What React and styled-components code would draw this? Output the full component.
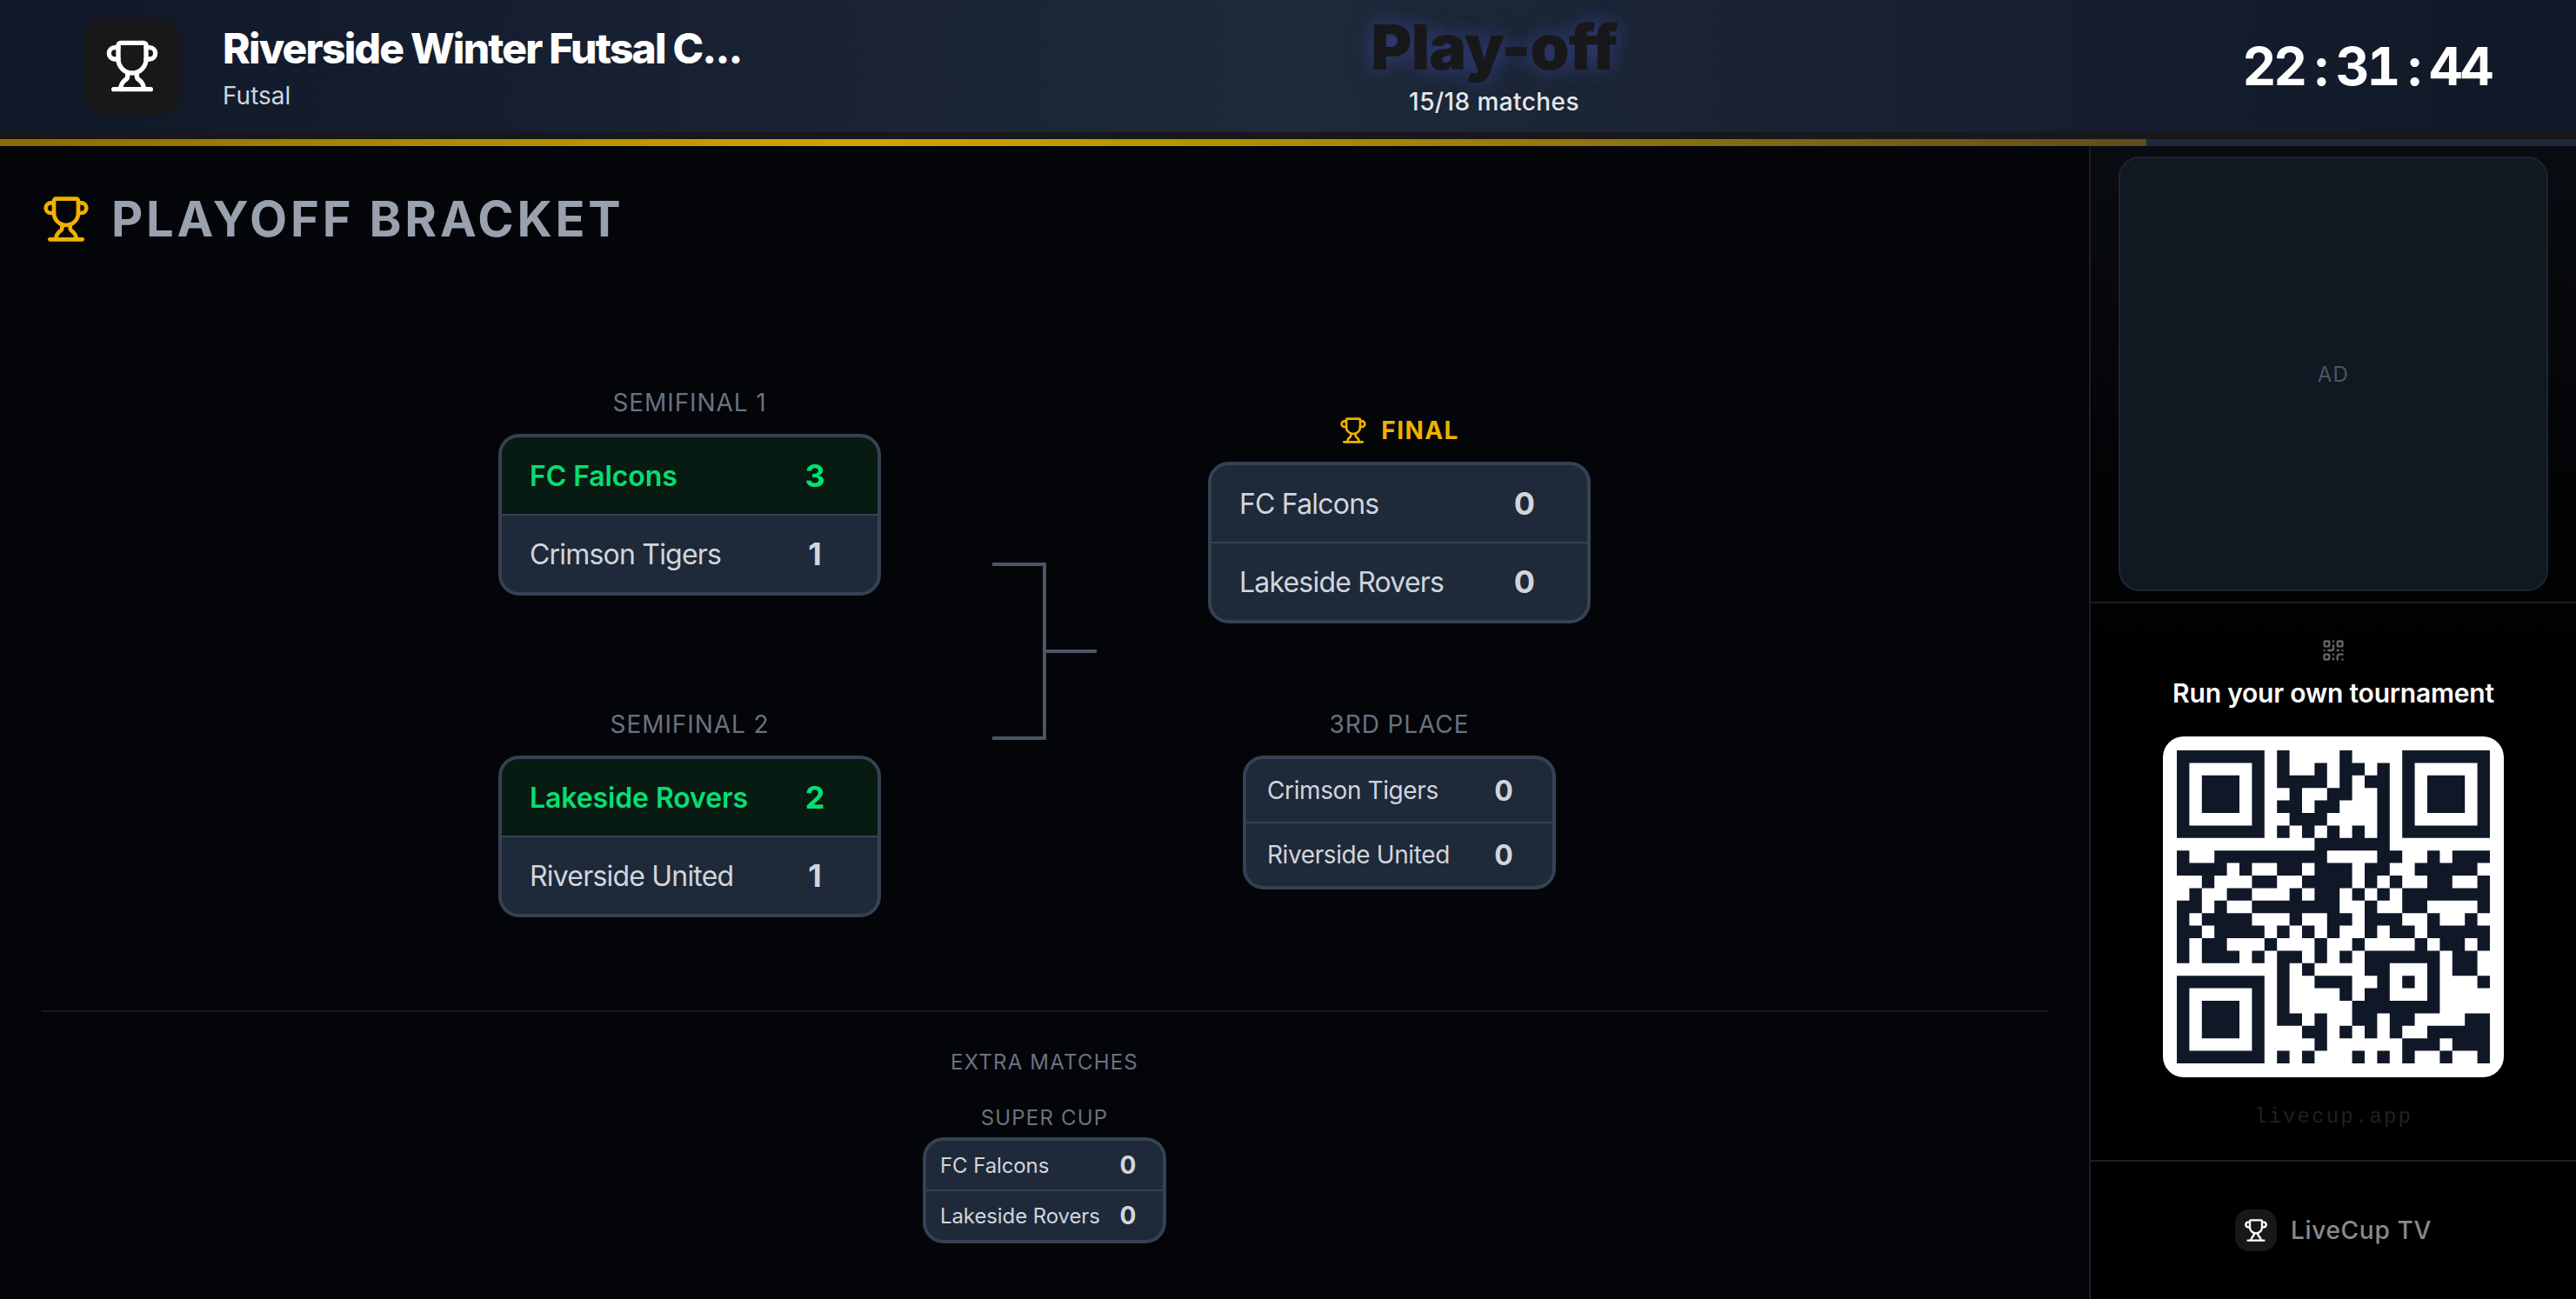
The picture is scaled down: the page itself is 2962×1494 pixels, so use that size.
import React from 'react';
import styled, { createGlobalStyle } from 'styled-components';
import { Trophy, QrCode } from 'lucide-react';

const GlobalStyle = createGlobalStyle`
  html, body {
    margin: 0;
    padding: 0;
    background: #030508;
  }
  * {
    box-sizing: border-box;
  }
  #root {
    font-family: Inter, 'Liberation Sans', sans-serif;
  }
`;

const SIZES = {
  lg: { width: 440, row: 88, pad: 32, name: 32, score: 36, cell: 80, track: -0.8 },
  md: { width: 360, row: 72, pad: 24, name: 28, score: 32, cell: 64, track: -0.4 },
  sm: { width: 280, row: 56, pad: 16, name: 24, score: 28, cell: 48, track: -0.1 },
};

const Page = styled.div`
  width: 100%;
  height: 100vh;
  display: flex;
  flex-direction: column;
  overflow: hidden;
  background: #030508;
`;

const Header = styled.header`
  height: 152px;
  flex-shrink: 0;
  padding: 0 96px;
  display: flex;
  align-items: center;
  justify-content: space-between;
  background: linear-gradient(90deg, #101828, #1e2939, #101828);
`;

const Brand = styled.div`
  width: 760px;
  display: flex;
  align-items: center;
  gap: 48px;
`;

const BrandIcon = styled.div`
  width: 112px;
  height: 112px;
  flex-shrink: 0;
  border-radius: 24px;
  background: #18181b;
  color: #fff;
  display: flex;
  align-items: center;
  justify-content: center;
`;

const BrandText = styled.div`
  min-width: 0;
`;

const TournamentName = styled.div`
  font-size: 48px;
  line-height: 60px;
  font-weight: 800;
  letter-spacing: -0.038em;
  color: #fff;
  white-space: nowrap;
`;

const Sport = styled.div`
  margin-top: 8px;
  font-size: 28px;
  line-height: 32px;
  color: #d1d5dc;
`;

const Phase = styled.div`
  display: flex;
  flex-direction: column;
  align-items: center;
`;

const PhaseName = styled.div`
  font-size: 72px;
  line-height: 72px;
  font-weight: 900;
  letter-spacing: -0.8px;
  color: #18181b;
  text-shadow: 0 0 24px rgba(79, 91, 213, 0.5);
`;

const PhaseCount = styled.div`
  margin-top: 9px;
  font-size: 28px;
  line-height: 36px;
  font-weight: 500;
  letter-spacing: 0.4px;
  color: #e5e7eb;
`;

const Clock = styled.div`
  display: flex;
  font-size: 60px;
  line-height: 72px;
  font-weight: 700;
  font-variant-numeric: tabular-nums;
  color: #fff;
`;

const ClockChar = styled.span`
  width: 35.75px;
  display: flex;
  justify-content: center;
`;

const ProgressTrack = styled.div`
  height: 16px;
  flex-shrink: 0;
  border-top: 8px solid #18181b;
  background: #1e2939;
`;

const ProgressFill = styled.div`
  height: 100%;
  background: linear-gradient(90deg, #8a6c00 0%, #d0a505 40%, #b39200 57%, #5f4c1c 100%);
`;

const Body = styled.div`
  flex: 1;
  min-height: 0;
  display: flex;
`;

const Main = styled.main`
  flex: 1;
  min-width: 0;
  padding: 48px 48px 48px;
  display: flex;
  flex-direction: column;
`;

const SectionTitle = styled.h1`
  margin: 0 0 48px;
  height: 72px;
  display: flex;
  align-items: center;
  gap: 24px;
  font-size: 56px;
  line-height: 72px;
  font-weight: 700;
  letter-spacing: 0.068em;
  color: #99a1af;
  svg {
    color: #f0b100;
  }
`;

const BracketArea = styled.div`
  flex: 1;
  min-height: 0;
  display: flex;
  align-items: center;
  justify-content: center;
  gap: 128px;
`;

const Round = styled.div`
  width: 440px;
  display: flex;
  flex-direction: column;
  align-items: center;
  gap: ${(p) => p.$gap}px;
`;

const MatchGroup = styled.div`
  display: flex;
  flex-direction: column;
  align-items: center;
  gap: ${(p) => p.$gap}px;
`;

const MatchLabel = styled.div`
  font-size: ${(p) => (p.$small ? 24 : 28)}px;
  line-height: ${(p) => (p.$small ? 32 : 40)}px;
  letter-spacing: ${(p) => (p.$small ? 1.2 : 0.9)}px;
  text-transform: uppercase;
  color: #6a7282;
`;

const FinalLabel = styled.div`
  display: flex;
  align-items: center;
  gap: 16px;
  font-size: 28px;
  line-height: 40px;
  font-weight: 700;
  letter-spacing: 0.05em;
  text-transform: uppercase;
  color: #f0b100;
`;

const Card = styled.div`
  width: ${(p) => SIZES[p.$size].width}px;
  border: 4px solid #364153;
  border-radius: 24px;
  background: #1e2939;
  overflow: hidden;
`;

const TeamRow = styled.div`
  height: ${(p) => SIZES[p.$size].row}px;
  padding: 0 ${(p) => SIZES[p.$size].pad}px;
  display: flex;
  align-items: center;
  justify-content: space-between;
  background: ${(p) => (p.$winner ? '#081b12' : 'transparent')};
  & + & {
    box-sizing: content-box;
    border-top: 2px solid #364153;
  }
`;

const TeamName = styled.span`
  font-size: ${(p) => SIZES[p.$size].name}px;
  font-weight: ${(p) => (p.$winner ? 600 : 400)};
  letter-spacing: ${(p) => (p.$winner ? -0.1 : SIZES[p.$size].track)}px;
  color: ${(p) => (p.$winner ? '#05df72' : '#d1d5dc')};
  white-space: nowrap;
`;

const Score = styled.span`
  width: ${(p) => SIZES[p.$size].cell}px;
  text-align: center;
  flex-shrink: 0;
  font-size: ${(p) => SIZES[p.$size].score}px;
  font-weight: 700;
  color: ${(p) => (p.$winner ? '#05df72' : '#d1d5dc')};
`;

const Connector = styled.div`
  width: 120px;
  flex-shrink: 0;
  display: flex;
  align-items: center;
`;

const ConnectorBracket = styled.div`
  width: 62px;
  height: 204px;
  border: 4px solid #4a5565;
  border-left: none;
`;

const ConnectorStub = styled.div`
  width: 58px;
  height: 4px;
  background: #4a5565;
`;

const Extras = styled.section`
  flex-shrink: 0;
  border-top: 2px solid #18181b;
  padding: 42px 0 16px;
  display: flex;
  flex-direction: column;
  align-items: center;
`;

const ExtrasTitle = styled.div`
  margin-bottom: 32px;
  font-size: 24px;
  line-height: 32px;
  letter-spacing: 0.05em;
  text-transform: uppercase;
  color: #6a7282;
`;

const Sidebar = styled.aside`
  width: 560px;
  flex-shrink: 0;
  border-left: 2px solid #1c1e23;
  display: flex;
  flex-direction: column;
  background: linear-gradient(180deg, #090c11 0%, #020305 30%, #000 50%);
`;

const AdSection = styled.div`
  height: 526px;
  flex-shrink: 0;
  padding: 12px 32px;
  border-bottom: 2px solid #1c1e23;
`;

const AdBox = styled.div`
  height: 100%;
  border: 2px solid #1e2530;
  border-radius: 24px;
  background: #101822;
  display: flex;
  align-items: center;
  justify-content: center;
  font-size: 24px;
  letter-spacing: 0.05em;
  color: #4a5565;
`;

const PromoSection = styled.div`
  flex: 1;
  min-height: 0;
  padding-top: 40px;
  display: flex;
  flex-direction: column;
  align-items: center;
`;

const PromoIcon = styled.div`
  height: 28px;
  color: #666;
  svg {
    display: block;
  }
`;

const PromoTitle = styled.div`
  margin: 15px 0 30px;
  font-size: 30px;
  line-height: 40px;
  font-weight: 600;
  letter-spacing: -0.2px;
  color: #fff;
`;

const QrBox = styled.div`
  width: 392px;
  height: 392px;
  padding: 16px;
  border-radius: 24px;
  background: #fff;
  svg {
    display: block;
  }
`;

const PromoUrl = styled.div`
  margin-top: 30px;
  font-family: 'Liberation Mono', monospace;
  font-size: 24px;
  line-height: 32px;
  letter-spacing: 0.09em;
  color: #1f2023;
`;

const SidebarFooter = styled.div`
  height: 160px;
  flex-shrink: 0;
  border-top: 2px solid #1c1e23;
  display: flex;
  align-items: center;
  justify-content: center;
  gap: 16px;
`;

const FooterIcon = styled.div`
  width: 48px;
  height: 48px;
  border-radius: 16px;
  background: #18181b;
  color: #fff;
  display: flex;
  align-items: center;
  justify-content: center;
`;

const FooterName = styled.div`
  font-size: 28px;
  font-weight: 500;
  letter-spacing: 0.025em;
  color: #8a8a8a;
`;

// dark runs per row, [from, to] columns
const QR_RUNS = [
  [[0, 6], [8, 8], [13, 13], [18, 24]],
  [[0, 0], [6, 6], [8, 8], [11, 11], [13, 14], [16, 16], [18, 18], [24, 24]],
  [[0, 0], [2, 4], [6, 6], [8, 11], [13, 13], [15, 16], [18, 18], [20, 22], [24, 24]],
  [[0, 0], [2, 4], [6, 6], [9, 9], [12, 13], [16, 16], [18, 18], [20, 22], [24, 24]],
  [[0, 0], [2, 4], [6, 6], [8, 9], [11, 12], [16, 16], [18, 18], [20, 22], [24, 24]],
  [[0, 0], [6, 6], [9, 11], [16, 16], [18, 18], [24, 24]],
  [[0, 6], [8, 8], [10, 10], [12, 12], [14, 14], [16, 16], [18, 24]],
  [[11, 16]],
  [[0, 0], [3, 11], [16, 17], [20, 20], [22, 24]],
  [[0, 3], [5, 5], [8, 9], [11, 13], [15, 16], [19, 23]],
  [[2, 2], [6, 7], [10, 13], [15, 15], [17, 17], [20, 21], [24, 24]],
  [[1, 1], [4, 5], [9, 9], [11, 12], [14, 14], [16, 16], [18, 24]],
  [[0, 1], [3, 3], [6, 12], [15, 15], [18, 19], [24, 24]],
  [[0, 0], [2, 5], [9, 9], [12, 13], [15, 17], [20, 20], [23, 23]],
  [[0, 1], [3, 6], [8, 8], [10, 10], [12, 12], [15, 15], [17, 18], [20, 24]],
  [[0, 0], [2, 3], [7, 7], [11, 11], [14, 14], [19, 19], [21, 22], [24, 24]],
  [[0, 0], [2, 4], [6, 6], [8, 9], [11, 11], [13, 13], [15, 20], [22, 23]],
  [[8, 8], [10, 10], [15, 16], [20, 20], [22, 23]],
  [[0, 6], [8, 8], [11, 13], [16, 16], [18, 18], [20, 20], [24, 24]],
  [[0, 0], [6, 6], [8, 8], [13, 13], [15, 16], [20, 20]],
  [[0, 0], [2, 4], [6, 6], [8, 8], [14, 20]],
  [[0, 0], [2, 4], [6, 6], [8, 9], [11, 11], [14, 15], [17, 18], [23, 24]],
  [[0, 0], [2, 4], [6, 6], [10, 11], [13, 13], [15, 15], [17, 17], [20, 24]],
  [[0, 0], [6, 6], [11, 11], [18, 20], [22, 24]],
  [[0, 6], [8, 8], [10, 10], [14, 14], [16, 16], [18, 18], [21, 21], [24, 24]],
];

const qrPath = QR_RUNS.map((runs, y) =>
  runs.map(([a, b]) => `M${a} ${y}h${b - a + 1}v1h-${b - a + 1}z`).join('')
).join('');

const Match = ({ size = 'lg', teams }) => (
  <Card $size={size}>
    {teams.map((t) => (
      <TeamRow key={t.name} $size={size} $winner={t.winner}>
        <TeamName $size={size} $winner={t.winner}>{t.name}</TeamName>
        <Score $size={size} $winner={t.winner}>{t.score}</Score>
      </TeamRow>
    ))}
  </Card>
);

const played = 15;
const total = 18;
const clockText = '22:31:44';

export default function App() {
  return (
    <Page>
      <GlobalStyle />
      <Header>
        <Brand>
          <BrandIcon><Trophy size={64} /></BrandIcon>
          <BrandText>
            <TournamentName>Riverside Winter Futsal C...</TournamentName>
            <Sport>Futsal</Sport>
          </BrandText>
        </Brand>
        <Phase>
          <PhaseName>Play-off</PhaseName>
          <PhaseCount>{played}/{total} matches</PhaseCount>
        </Phase>
        <Clock>
          {clockText.split('').map((c, i) => <ClockChar key={i}>{c}</ClockChar>)}
        </Clock>
      </Header>
      <ProgressTrack>
        <ProgressFill style={{ width: `${(played / total) * 100}%` }} />
      </ProgressTrack>
      <Body>
        <Main>
          <SectionTitle><Trophy size={56} />PLAYOFF BRACKET</SectionTitle>
          <BracketArea>
            <Round $gap={128}>
              <MatchGroup $gap={16}>
                <MatchLabel>Semifinal 1</MatchLabel>
                <Match teams={[
                  { name: 'FC Falcons', score: 3, winner: true },
                  { name: 'Crimson Tigers', score: 1 },
                ]} />
              </MatchGroup>
              <MatchGroup $gap={16}>
                <MatchLabel>Semifinal 2</MatchLabel>
                <Match teams={[
                  { name: 'Lakeside Rovers', score: 2, winner: true },
                  { name: 'Riverside United', score: 1 },
                ]} />
              </MatchGroup>
            </Round>
            <Connector>
              <ConnectorBracket />
              <ConnectorStub />
            </Connector>
            <Round $gap={96}>
              <MatchGroup $gap={16}>
                <FinalLabel><Trophy size={32} />Final</FinalLabel>
                <Match teams={[
                  { name: 'FC Falcons', score: 0 },
                  { name: 'Lakeside Rovers', score: 0 },
                ]} />
              </MatchGroup>
              <MatchGroup $gap={16}>
                <MatchLabel>3rd Place</MatchLabel>
                <Match size="md" teams={[
                  { name: 'Crimson Tigers', score: 0 },
                  { name: 'Riverside United', score: 0 },
                ]} />
              </MatchGroup>
            </Round>
          </BracketArea>
          <Extras>
            <ExtrasTitle>Extra Matches</ExtrasTitle>
            <MatchGroup $gap={6}>
              <MatchLabel $small>Super Cup</MatchLabel>
              <Match size="sm" teams={[
                { name: 'FC Falcons', score: 0 },
                { name: 'Lakeside Rovers', score: 0 },
              ]} />
            </MatchGroup>
          </Extras>
        </Main>
        <Sidebar>
          <AdSection>
            <AdBox>AD</AdBox>
          </AdSection>
          <PromoSection>
            <PromoIcon><QrCode size={28} /></PromoIcon>
            <PromoTitle>Run your own tournament</PromoTitle>
            <QrBox>
              <svg width="360" height="360" viewBox="0 0 25 25">
                <path d={qrPath} fill="#101828" />
              </svg>
            </QrBox>
            <PromoUrl>livecup.app</PromoUrl>
          </PromoSection>
          <SidebarFooter>
            <FooterIcon><Trophy size={28} /></FooterIcon>
            <FooterName>LiveCup TV</FooterName>
          </SidebarFooter>
        </Sidebar>
      </Body>
    </Page>
  );
}
